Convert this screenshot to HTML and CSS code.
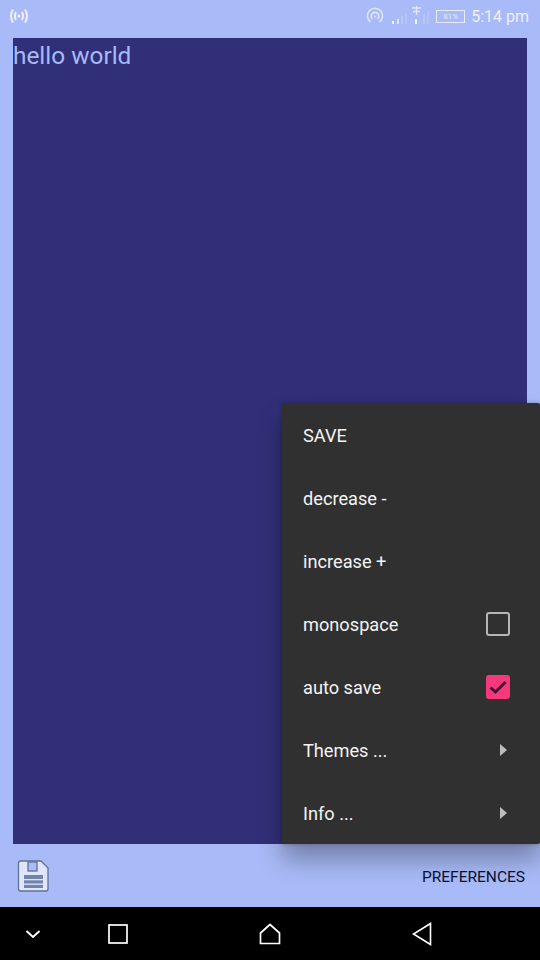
FILE: index.html
```html
<!DOCTYPE html>
<html lang="en">
<head>
    <meta charset="UTF-8">
    <meta name="viewport" content="width=device-width, initial-scale=1.0">
    <title>hello world</title>
    <link rel="stylesheet" href="styles.css">
</head>
<body>

<div class="screen">
    <!-- status bar -->
    <div class="status-bar">
        <svg class="icon-broadcast" width="20" height="16" viewBox="0 0 20 16">
            <path d="M4 1.5 Q0 8 4 14.5 M7 4 Q5 8 7 12 M13 4 Q15 8 13 12 M16 1.5 Q20 8 16 14.5" fill="none" stroke="#eef1ff" stroke-width="2"/>
            <circle cx="10" cy="8" r="1.6" fill="#eef1ff"/>
        </svg>
        <div class="status-right">
            <svg width="18" height="18" viewBox="0 0 18 18">
                <path d="M4.5 15 A7.6 7.6 0 1 1 13.5 15" fill="none" stroke="#dfe5fb" stroke-width="1.6"/>
                <path d="M6.5 12 A3.8 3.8 0 1 1 11.5 12" fill="none" stroke="#dfe5fb" stroke-width="1.6"/>
                <circle cx="9" cy="9.5" r="1" fill="#dfe5fb"/>
            </svg>
            <svg class="icon-signal" width="40" height="22" viewBox="0 0 40 22">
                <rect x="0" y="16" width="2" height="3" fill="#eef1ff"/>
                <rect x="5" y="14" width="2" height="5" fill="#dfe5fb"/>
                <rect x="9" y="11" width="2" height="8" fill="#bac7f9"/>
                <rect x="13" y="8" width="2" height="11" fill="#b4c3f9"/>
                <path d="M20 3 H29 M24.5 1 V10 M21 6.5 H28" fill="none" stroke="#eef1ff" stroke-width="1.4" opacity="0.8"/>
                <rect x="23" y="14" width="2" height="5" fill="#eef1ff"/>
                <rect x="31" y="9" width="2" height="10" fill="#b8c5f9"/>
                <rect x="35" y="6" width="2" height="13" fill="#b4c3f9"/>
            </svg>
            <div class="battery"><span>81%</span></div>
            <span class="clock">5:14 pm</span>
        </div>
    </div>

    <!-- editor -->
    <div class="content">
        <div class="editor">hello world</div>
    </div>

    <!-- bottom bar -->
    <div class="bottom-bar">
        <svg width="34" height="34" viewBox="0 0 34 34">
            <path d="M2.5 4 Q2.5 2 4.5 2 H25 L32 9 V30 Q32 32 30 32 H4.5 Q2.5 32 2.5 30 Z" fill="#dfe6fc" stroke="#5f7196" stroke-width="1.3"/>
            <rect x="12" y="3" width="9" height="9" fill="#a9bbf8" stroke="#5f7196" stroke-width="1.3"/>
            <rect x="8" y="16" width="19" height="13" fill="#7384ab"/>
            <rect x="8" y="20" width="19" height="1.3" fill="#dfe6fc"/>
            <rect x="8" y="24.5" width="19" height="1.3" fill="#dfe6fc"/>
        </svg>
        <span class="pref-btn">PREFERENCES</span>
    </div>

    <!-- navigation bar -->
    <div class="nav-bar">
        <svg width="20" height="20" viewBox="0 0 20 20">
            <path d="M3.5 7 L10 13 L16.5 7" fill="none" stroke="#fff" stroke-width="2"/>
        </svg>
        <svg width="20" height="20" viewBox="0 0 20 20">
            <rect x="1" y="1" width="18" height="18" fill="none" stroke="#fff" stroke-width="1.7"/>
        </svg>
        <svg width="22" height="22" viewBox="0 0 22 22">
            <path d="M1.5 20.5 V10 L11 1.5 L20.5 10 V20.5 Z" fill="none" stroke="#fff" stroke-width="1.7"/>
        </svg>
        <svg width="20" height="24" viewBox="0 0 20 24">
            <path d="M18.5 1.5 V22.5 L1.5 12 Z" fill="none" stroke="#fff" stroke-width="1.6"/>
        </svg>
    </div>

    <!-- popup menu -->
    <div class="menu">
        <div class="menu-item">SAVE</div>
        <div class="menu-item">decrease -</div>
        <div class="menu-item">increase +</div>
        <div class="menu-item">monospace <span class="check"></span></div>
        <div class="menu-item">auto save
            <span class="check checked">
                <svg width="24" height="24" viewBox="0 0 24 24">
                    <path d="M4.5 12.5 L9.5 17 L19.5 7" fill="none" stroke="#4a1030" stroke-width="3"/>
                </svg>
            </span>
        </div>
        <div class="menu-item">Themes ... <span class="arrow"></span></div>
        <div class="menu-item">Info ... <span class="arrow"></span></div>
    </div>
</div>

</body>
</html>
```

FILE: styles.css
```css
html, body {
    margin: 0;
    padding: 0;
}
body {
    font-family: Roboto, "Liberation Sans", sans-serif;
    background-color: #a8baf7;
}
.screen {
    position: relative;
    width: 540px;
    height: 960px;
    overflow: hidden;
    display: flex;
    flex-direction: column;
}
.status-bar {
    height: 38px;
    flex: none;
    display: flex;
    justify-content: space-between;
    align-items: center;
    padding: 0 11px 6px 9px;
    box-sizing: border-box;
}
.status-right {
    display: flex;
    align-items: center;
}
.icon-signal {
    margin-left: 8px;
}
.battery {
    width: 27px;
    height: 11px;
    margin-left: 4px;
    border: 1px solid #e6ebfd;
    display: flex;
    align-items: center;
    justify-content: center;
    font-size: 8px;
    color: #e6ebfd;
}
.clock {
    margin-left: 6px;
    font-size: 16px;
    color: #eef1ff;
}
.content {
    flex: 1;
    display: flex;
    padding: 0 13px;
}
.editor {
    flex: 1;
    background-color: #312f78;
    color: #a8baf7;
    font-size: 24.4px;
    line-height: 36px;
}
.bottom-bar {
    height: 63px;
    flex: none;
    display: flex;
    justify-content: space-between;
    align-items: center;
    padding: 0 15px 0 16px;
    box-sizing: border-box;
}
.pref-btn {
    margin-top: 2px;
    font-size: 15.5px;
    color: #0b1030;
}
.nav-bar {
    height: 53px;
    flex: none;
    background-color: #000;
    display: grid;
    grid-template-columns: 85px 151px 153px 1fr;
    align-items: center;
    padding-left: 23px;
    box-sizing: border-box;
}
.menu {
    position: absolute;
    top: 403px;
    right: 0;
    width: 258px;
    height: 441px;
    background-color: #303030;
    border-radius: 2px;
    box-shadow: 0 16px 24px rgba(0, 0, 0, 0.3), 0 0 4px rgba(0, 0, 0, 0.25);
}
.menu-item {
    height: 63px;
    display: flex;
    justify-content: space-between;
    align-items: center;
    padding: 2px 0 0 21px;
    box-sizing: border-box;
    font-size: 18.2px;
    color: #f4f4f4;
}
.check {
    width: 20px;
    height: 20px;
    margin: 0 30px 2px 0;
    border: 2px solid #b5b5b5;
    border-radius: 3px;
}
.check.checked {
    background-color: #f5397c;
    border-color: #f5397c;
}
.check.checked svg {
    display: block;
    margin: -2px;
}
.arrow {
    margin: 0 33px 2px 0;
    border-left: 7px solid #bdbdbd;
    border-top: 6px solid transparent;
    border-bottom: 6px solid transparent;
}
```
